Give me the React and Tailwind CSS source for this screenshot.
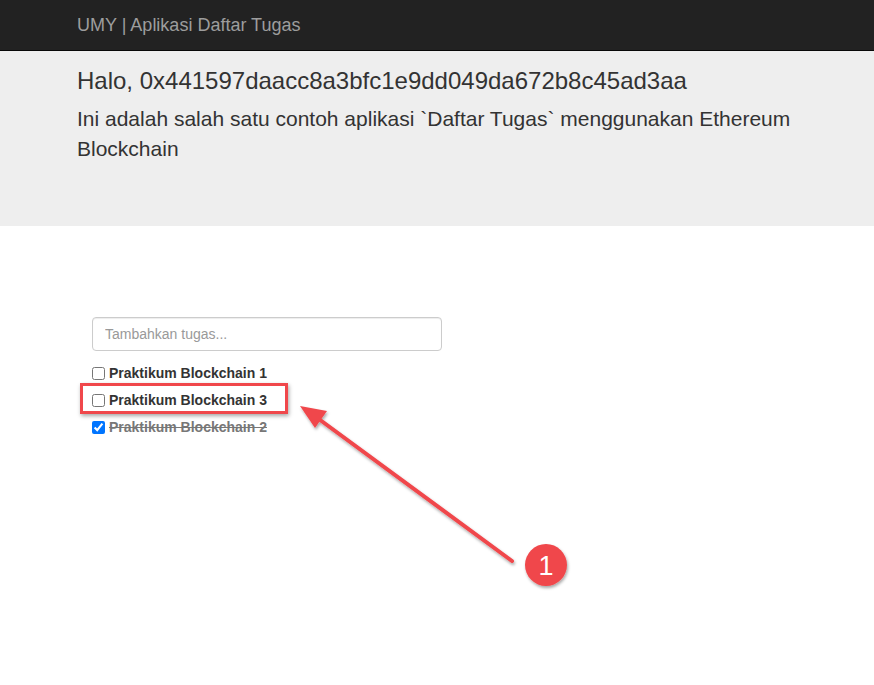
import { useState } from 'react';

const font = { fontFamily: '"Liberation Sans", Arial, Helvetica, sans-serif' };

function TodoItem({ label, done, onToggle }) {
  return (
    <label className="flex items-center h-[27px] text-[14px] font-bold cursor-pointer">
      <input
        type="checkbox"
        checked={done}
        onChange={onToggle}
        className="w-[13px] h-[13px] m-0 mr-[4px] accent-[#0075ff]"
      />
      <span className={done ? 'line-through text-[#777]' : 'text-[#333]'}>{label}</span>
    </label>
  );
}

export default function App() {
  const [tasks, setTasks] = useState([
    { id: 1, label: 'Praktikum Blockchain 1', done: false },
    { id: 3, label: 'Praktikum Blockchain 3', done: false },
    { id: 2, label: 'Praktikum Blockchain 2', done: true },
  ]);

  const toggle = id => setTasks(tasks.map(t => (t.id === id ? { ...t, done: !t.done } : t)));

  return (
    <div className="relative w-[874px] h-[685px] bg-white overflow-hidden text-[#333]" style={font}>
      {/* Navbar */}
      <nav className="h-[51px] bg-[#222] border-b border-[#080808]">
        <div className="w-[750px] mx-auto px-[15px] flex items-center h-[50px]">
          <span className="text-[18px] text-[#9d9d9d] leading-[20px]">UMY | Aplikasi Daftar Tugas</span>
        </div>
      </nav>

      {/* Jumbotron */}
      <div className="bg-[#eee] h-[175px]">
        <div className="w-[750px] mx-auto px-[15px] pt-[15px]">
          <h1 className="text-[24px] leading-[30px] font-normal">Halo, 0x441597daacc8a3bfc1e9dd049da672b8c45ad3aa</h1>
          <p className="text-[21px] leading-[30px] mt-[8px]">
            Ini adalah salah satu contoh aplikasi `Daftar Tugas` menggunakan Ethereum Blockchain
          </p>
        </div>
      </div>

      {/* Content */}
      <div className="w-[750px] mx-auto px-[30px] pt-[91px]">
        <form className="w-[350px]" onSubmit={e => e.preventDefault()}>
          <input
            type="text"
            placeholder="Tambahkan tugas..."
            className="w-[350px] h-[34px] px-[12px] text-[14px] border border-[#ccc] rounded-[4px] placeholder:text-[#999] outline-none shadow-[inset_0_1px_1px_rgba(0,0,0,0.075)]"
          />
        </form>
        <div className="mt-[9px]">
          {tasks.map(t => (
            <TodoItem key={t.id} label={t.label} done={t.done} onToggle={() => toggle(t.id)} />
          ))}
        </div>
      </div>

      {/* Annotation: highlight box */}
      <div className="absolute left-[80px] top-[383px] w-[208px] h-[31px] border-[3px] border-[#f0474b] shadow-[1px_2px_4px_rgba(0,0,0,0.35)]" />

      {/* Annotation: arrow */}
      <svg className="absolute left-0 top-0 pointer-events-none" width="874" height="685">
        <defs>
          <filter id="sh" x="-20%" y="-20%" width="140%" height="140%">
            <feDropShadow dx="1" dy="2" stdDeviation="1.5" floodColor="#000" floodOpacity="0.35" />
          </filter>
        </defs>
        <g filter="url(#sh)">
          <line x1="512" y1="561" x2="312" y2="414" stroke="#f0474b" strokeWidth="4" strokeLinecap="round" />
          <polygon points="300,406 327,411 315,428" fill="#f0474b" />
          <circle cx="546" cy="565" r="21" fill="#f0474b" />
        </g>
        <text x="546" y="575" textAnchor="middle" fill="#fff" fontSize="27" fontFamily='"Liberation Sans", Arial, sans-serif'>1</text>
      </svg>
    </div>
  );
}
